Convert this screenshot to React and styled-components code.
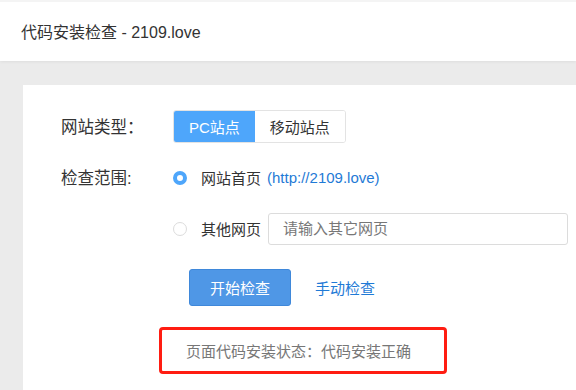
import React, { useState } from "react";
import styled, { createGlobalStyle } from "styled-components";

const GlobalStyle = createGlobalStyle`
  html, body {
    margin: 0;
    padding: 0;
    background: #ebebeb;
    font-family: "Liberation Sans", Arial, "Noto Sans CJK SC", sans-serif;
    color: #333;
  }
  * { box-sizing: border-box; }
`;

const Page = styled.div`
  width: 576px;
  height: 390px;
  overflow: hidden;
  background: #ebebeb;
`;

const Header = styled.header`
  height: 61px;
  background: #fff;
  border-top: 2px solid #f4f4f4;
  box-shadow: 0 1px 3px rgba(0, 0, 0, 0.06);
  display: flex;
  align-items: center;
  padding: 0 21px 2px;
  h1 {
    margin: 0;
    font-size: 16px;
    font-weight: normal;
    color: #333;
  }
`;

const Card = styled.main`
  margin: 24px 0 0 23px;
  background: #fff;
  height: 320px;
  padding: 25px 0 0 38px;
`;

const Row = styled.div`
  display: flex;
  align-items: ${(p) => p.align || "center"};
  margin-bottom: ${(p) => p.mb || 0}px;
`;

const Label = styled.div`
  width: 112px;
  font-size: 16.5px;
  color: #333;
  line-height: 32px;
`;

const Segmented = styled.div`
  display: flex;
  border: 1px solid #e3e3e3;
  border-radius: 3px;
  overflow: hidden;
`;

const SegButton = styled.button`
  height: 31px;
  padding: 0 15px;
  border: none;
  font-family: inherit;
  font-size: 15px;
  background: ${(p) => (p.active ? "#4ea6fb" : "#fff")};
  color: ${(p) => (p.active ? "#fff" : "#333")};
  cursor: pointer;
`;

const Options = styled.div`
  display: flex;
  flex-direction: column;
  gap: 20px;
`;

const Option = styled.label`
  display: flex;
  align-items: center;
  height: 31px;
  font-size: 15px;
  color: #333;
  cursor: pointer;
`;

const Radio = styled.span`
  width: 14px;
  height: 14px;
  border-radius: 50%;
  margin: 0 14px 0 0;
  border: ${(p) => (p.checked ? "4px solid #4ea6fb" : "1px solid #dcdcdc")};
  background: #fff;
`;

const UrlHint = styled.span`
  margin-left: 6px;
  color: #1f7ad6;
`;

const Input = styled.input`
  margin-left: 7px;
  width: 300px;
  height: 32px;
  border: 1px solid #dcdcdc;
  border-radius: 3px;
  padding: 0 14px;
  font-family: inherit;
  font-size: 15px;
  color: #333;
  &::placeholder {
    color: #777;
  }
`;

const Actions = styled.div`
  display: flex;
  align-items: center;
  gap: 24px;
  margin: 25px 0 0 128px;
`;

const PrimaryButton = styled.button`
  width: 102px;
  height: 37px;
  border: 1px solid #3f88da;
  border-radius: 3px;
  background: #4f97e6;
  color: #fff;
  font-family: inherit;
  font-size: 15px;
  cursor: pointer;
`;

const LinkText = styled.a`
  color: #1f7ad6;
  font-size: 15px;
  text-decoration: none;
`;

const Status = styled.div`
  margin: 21px 0 0 98px;
  width: 288px;
  height: 47px;
  border: 3px solid #ff1d12;
  border-radius: 4px;
  display: flex;
  align-items: center;
  padding-left: 24px;
  font-size: 15px;
  color: #777;
`;

export default function App() {
  const [type, setType] = useState("pc");
  const [scope, setScope] = useState("home");
  return (
    <Page>
      <GlobalStyle />
      <Header>
        <h1>代码安装检查 - 2109.love</h1>
      </Header>
      <Card>
        <Row mb={19}>
          <Label>网站类型：</Label>
          <Segmented>
            <SegButton active={type === "pc"} onClick={() => setType("pc")}>
              PC站点
            </SegButton>
            <SegButton active={type === "m"} onClick={() => setType("m")}>
              移动站点
            </SegButton>
          </Segmented>
        </Row>
        <Row align="flex-start">
          <Label>检查范围:</Label>
          <Options>
            <Option onClick={() => setScope("home")}>
              <Radio checked={scope === "home"} />
              网站首页
              <UrlHint>(http://2109.love)</UrlHint>
            </Option>
            <Option onClick={() => setScope("other")}>
              <Radio checked={scope === "other"} />
              其他网页
              <Input placeholder="请输入其它网页" />
            </Option>
          </Options>
        </Row>
        <Actions>
          <PrimaryButton>开始检查</PrimaryButton>
          <LinkText href="#">手动检查</LinkText>
        </Actions>
        <Status>页面代码安装状态：代码安装正确</Status>
      </Card>
    </Page>
  );
}
